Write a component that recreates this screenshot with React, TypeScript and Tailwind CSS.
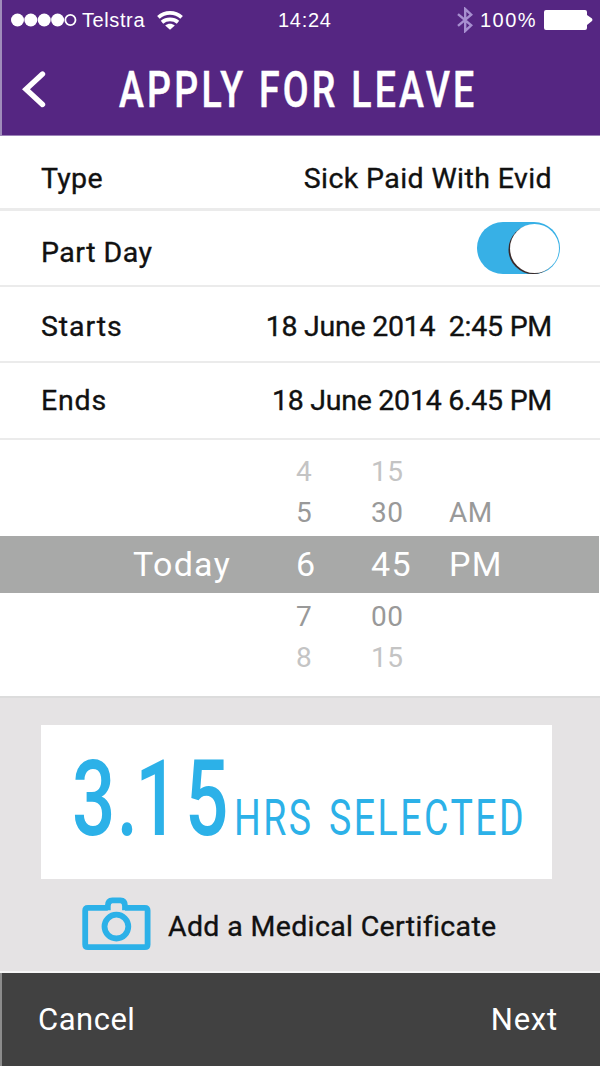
import type { ReactNode } from "react";

function SignalDots() {
  return (
    <svg className="h-[14px] w-[66px]" viewBox="0 0 66 14" fill="#fff">
      {[6.5, 19.8, 33.2, 46.6].map((cx) => (
        <circle key={cx} cx={cx} cy="7" r="6.5" />
      ))}
      <circle cx="59.4" cy="7" r="5.1" fill="none" stroke="#fff" strokeWidth="1.8" />
    </svg>
  );
}

function WifiIcon() {
  return (
    <svg className="h-[19px] w-[26px]" viewBox="0 0 26 19" fill="none" stroke="#fff" strokeWidth="3.8">
      <path d="M1.4 6.4C8 .4 18 .4 24.6 6.4" />
      <path d="M5 11.3C9.6 7.5 16.4 7.5 21 11.3" />
      <path d="M13 18.8L8.2 14.4C11.2 12.1 14.8 12.1 17.8 14.4Z" fill="#fff" stroke="none" />
    </svg>
  );
}

function BluetoothIcon() {
  return (
    <svg className="h-[26px] w-[16px]" viewBox="0 0 16 26" fill="none" stroke="#a78fd0" strokeWidth="2.4">
      <path d="M1 7.2L14.2 18.4L8.2 24V2L14.2 7.6L1 18.8" />
    </svg>
  );
}

function BatteryIcon() {
  return (
    <svg className="h-[20px] w-[49px]" viewBox="0 0 49 20" fill="#fff">
      <path d="M2 0H41Q43 0 43 2V5L48 8.5Q49 10 48 11L43 15V18Q43 20 41 20H2Q0 20 0 18V2Q0 0 2 0Z" />
    </svg>
  );
}

function CameraIcon() {
  return (
    <svg className="h-[54px] w-[69px]" viewBox="0 0 69 54" fill="none" stroke="#2cb1e8" strokeWidth="5.8" strokeLinejoin="round">
      <path d="M25.8 13.3V10.8H6Q3.2 10.8 3.2 13.6V47.4Q3.2 50.2 6 50.2H62.8Q65.6 50.2 65.6 47.4V13.6Q65.6 10.8 62.8 10.8H43V13.3M25.8 10.8V9Q25.8 3.4 30.4 3.4H38.4Q43 3.4 43 9V10.8" />
      <circle cx="34.4" cy="29.6" r="11.9" />
    </svg>
  );
}

function Row({ label, className, labelClass, children }: { label: string; className: string; labelClass: string; children: ReactNode }) {
  return (
    <div className={`flex items-center justify-between border-[#ebebeb] pr-[40px] pl-[41px] text-[28.5px] [-webkit-text-stroke:0.35px_#111] ${className}`}>
      <span className={labelClass}>{label}</span>
      {children}
    </div>
  );
}

const faded = "h-[41px] text-[28px] leading-[42px] tracking-[0.5px]";

function PickerRow({ cells, className }: { cells: string[]; className: string }) {
  return (
    <div className={`grid grid-cols-[133px_163px_75px_78px_1fr] ${className}`}>
      <span />
      {cells.map((cell, i) => (
        <span key={i}>{cell}</span>
      ))}
    </div>
  );
}

export default function App() {
  return (
    <div className="flex h-[1066px] w-[600px] flex-col overflow-hidden bg-white font-['Roboto',sans-serif] text-[#111]">
      <header className="flex h-[136px] shrink-0 flex-col border-b border-l-2 border-b-[#9c83b8] border-l-[#a08cbb] bg-[#552682] text-white">
        <div className="flex h-[40px] items-center pl-[9px] font-['Liberation_Sans',sans-serif] text-[20px]">
          <SignalDots />
          <span className="ml-[5px] w-[75px] tracking-[0.6px]">Telstra</span>
          <WifiIcon />
          <span className="ml-[95px] w-[179px] tracking-[0.7px]">14:24</span>
          <BluetoothIcon />
          <span className="ml-[7px] w-[64px] tracking-[1.5px]">100%</span>
          <BatteryIcon />
        </div>
        <div className="flex h-[95px] items-start">
          <svg className="mt-[30px] ml-[20px] h-[38px] w-[26px]" viewBox="0 0 26 38" fill="none" stroke="#fff" strokeWidth="5.4" strokeLinecap="round">
            <path d="M20.5 4L4 19.2L20.5 34.5" strokeLinejoin="miter" />
          </svg>
          <h1 className="mt-[20px] ml-[71px] origin-left scale-x-75 text-[50px] leading-[61px] font-medium tracking-[4.3px] whitespace-nowrap [-webkit-text-stroke:0.5px_#fff]">
            APPLY FOR LEAVE
          </h1>
        </div>
      </header>

      <section className="shrink-0">
        <Row label="Type" className="h-[75px] border-b-3 pt-[14px]" labelClass="tracking-[0.3px]">
          <span className="mr-[8px] tracking-[0.4px]">Sick Paid With Evid</span>
        </Row>
        <Row label="Part Day" className="h-[76px] border-b-2" labelClass="pt-[10px] tracking-[0.5px]">
          <span className="flex h-[52px] w-[83px] items-center justify-end rounded-full bg-[#37b0e6] pr-[1.5px]">
            <span className="size-[49px] rounded-full bg-white shadow-[-1.5px_1px_0.5px_#3a2a2a]" />
          </span>
        </Row>
        <Row label="Starts" className="h-[76px] border-b-2 pt-[6px]" labelClass="tracking-[0.9px]">
          <span className="mr-[8px] tracking-[-0.25px] whitespace-pre">18 June 2014  2:45 PM</span>
        </Row>
        <Row label="Ends" className="h-[77px] border-b-2 pt-[2px]" labelClass="tracking-[0.8px]">
          <span className="mr-[8px] tracking-[-0.25px]">18 June 2014 6.45 PM</span>
        </Row>
      </section>

      <section className="h-[256px] shrink-0 pt-[11px]">
        <PickerRow cells={["", "4", "15", ""]} className={`${faded} text-[#c4c4c4]`} />
        <PickerRow cells={["", "5", "30", "AM"]} className={`${faded} text-[#999]`} />
        <PickerRow
          cells={["Today", "6", "45", "PM"]}
          className="my-[3px] mr-[1px] h-[57px] bg-[#a8a9a8] text-[34px] leading-[57px] tracking-[1.3px] text-white"
        />
        <PickerRow cells={["", "7", "00", ""]} className={`${faded} text-[#999]`} />
        <PickerRow cells={["", "8", "15", ""]} className={`${faded} text-[#c4c4c4]`} />
      </section>

      <section className="flex h-[277px] shrink-0 flex-col border-t-2 border-b-2 border-t-[#dcdcdc] border-b-[#f6f6f6] bg-[#e5e3e4]">
        <div className="mt-[27px] ml-[41px] flex h-[154px] w-[511px] items-baseline bg-white pt-[11px] pl-[31px] whitespace-nowrap text-[#2cb1e8]">
          <span className="w-[162px]">
            <span className="inline-block origin-left scale-x-[0.72] text-[106px] leading-[126px] font-medium">
              <span className="tracking-[2px]">3.</span>
              <span className="-ml-[6px] tracking-[9px]">1</span>5
            </span>
          </span>
          <span className="w-[290px]">
            <span className="inline-block origin-left scale-x-75 text-[50px] tracking-[3.3px] [word-spacing:5px]">HRS SELECTED</span>
          </span>
        </div>
        <div className="mt-[17px] flex h-[56px] items-center pl-[82px]">
          <CameraIcon />
          <span className="ml-[17px] pt-[6px] text-[28.5px] tracking-[0.35px] [-webkit-text-stroke:0.35px_#111]">Add a Medical Certificate</span>
        </div>
      </section>

      <footer className="flex h-[93px] shrink-0 items-center justify-between border-l-2 border-[#8c8c8c] bg-[#414141] pt-[2px] pr-[42px] pl-[36px] text-[31px] text-white">
        <span className="tracking-[0.5px]">Cancel</span>
        <span className="tracking-[0.8px]">Next</span>
      </footer>
    </div>
  );
}
